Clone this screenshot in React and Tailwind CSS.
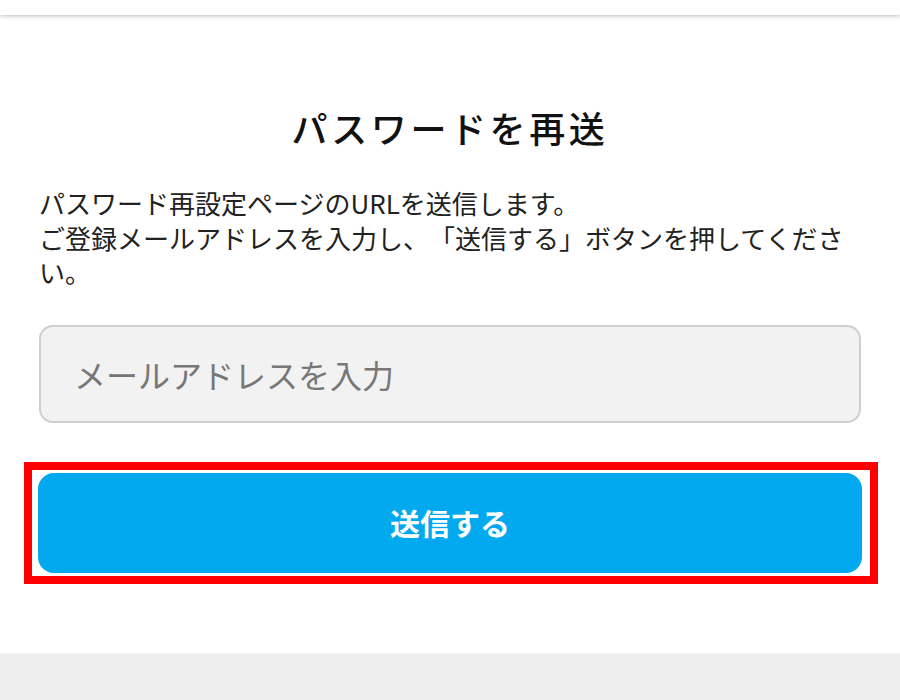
import { useState } from 'react';

export default function App() {
  const [email, setEmail] = useState('');

  return (
    <div className="min-h-[700px] flex flex-col bg-white font-['Noto_Sans_CJK_JP','Noto_Sans',sans-serif] text-[#222] [text-spacing-trim:space-all]">
      {/* header */}
      <header className="h-[15px] bg-white shadow-[0_1px_4px_rgba(0,0,0,0.25)] relative z-10" />

      <main className="px-[39px] pt-[85px] pb-[80px]">
        <h1 className="text-center text-[36px] leading-[54px] font-medium tracking-[0.1em] text-[#111]">
          パスワードを再送
        </h1>

        <p className="mt-[32px] text-[26px] leading-[34.5px] text-[#222]">
          パスワード再設定ページのURLを送信します。
          <br />
          ご登録メールアドレスを入力し、「送信する」ボタンを押してください。
        </p>

        <input
          type="email"
          value={email}
          onChange={(e) => setEmail(e.target.value)}
          placeholder="メールアドレスを入力"
          className="mt-[35px] block w-full h-[98px] px-[33px] rounded-[14px] border-2 border-[#cfcfcf] bg-[#f2f2f2] text-[32px] text-[#333] placeholder:text-[#777] outline-none"
        />

        {/* button with red highlight frame */}
        <div className="relative mt-[50px]">
          <button
            type="button"
            className="block w-[calc(100%+2px)] -ml-px h-[100px] rounded-[16px] bg-[#02a9ee] text-white text-[30px] font-bold"
          >
            送信する
          </button>
          <div className="absolute -left-[15px] -right-[17px] -top-[11px] -bottom-[11px] border-8 border-[#ff0000] pointer-events-none" />
        </div>
      </main>

      {/* footer */}
      <footer className="flex-1 bg-[#ededed] border-t border-[#f2f2f2]" />
    </div>
  );
}
